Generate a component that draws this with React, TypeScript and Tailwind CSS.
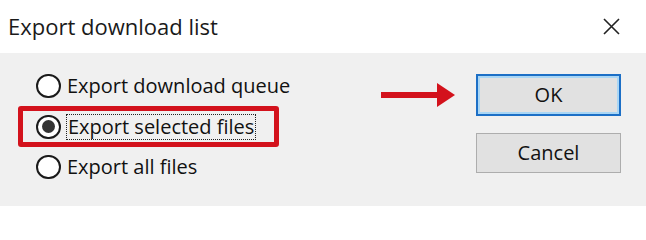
import React from "react";

type RadioRowProps = {
    label: string;
    checked?: boolean;
    focused?: boolean;
};

function RadioRow({ label, checked, focused }: RadioRowProps) {
    return (
        <div
            className={
                focused
                    ? "flex items-center h-[41px] w-[261px] px-[13px] border-[5px] border-[#d3121c] rounded-[3px]"
                    : "flex items-center h-[40px] px-[18px]"
            }
        >
            <span className="flex items-center justify-center w-[25px] h-[24px] rounded-full border-2 border-[#1a1a1a] bg-white shrink-0">
                {checked && <span className="w-[13px] h-[13px] rounded-full bg-[#333]" />}
            </span>
            <span
                className={
                    focused
                        ? "ml-[5px] px-[1px] leading-[24px] whitespace-nowrap border border-dotted border-[#222]"
                        : "ml-[6px] leading-[24px] whitespace-nowrap"
                }
            >
                {label}
            </span>
        </div>
    );
}

export default function App() {
    return (
        <div className="w-[646px] h-[206px] flex flex-col bg-[#f0f0f0] text-[#111] font-['Open_Sans',sans-serif] overflow-hidden">
            <div className="h-[53px] bg-white flex items-center justify-between pl-[8px] pr-[26px] shrink-0">
                <h1 className="text-[22px] text-[#1a1a1a]">Export download list</h1>
                <svg width="17" height="17" viewBox="0 0 17 17" className="text-[#222]">
                    <path d="M1 1L16 16M16 1L1 16" stroke="currentColor" strokeWidth="1.6" />
                </svg>
            </div>

            <div className="flex flex-1 text-[20px]">
                <div className="flex flex-col w-[279px] shrink-0 pt-[13px] pl-[18px]">
                    <RadioRow label="Export download queue" />
                    <RadioRow label="Export selected files" checked focused />
                    <RadioRow label="Export all files" />
                </div>

                <div className="flex flex-1 items-start pt-[21px] pl-[102px]">
                    <svg width="74" height="24" viewBox="0 0 74 24" className="mt-[9px] text-[#d3121c] shrink-0">
                        <rect x="0" y="9" width="58" height="6" fill="currentColor" />
                        <path d="M56 0L74 12L56 24Z" fill="currentColor" />
                    </svg>
                    <div className="flex flex-col gap-[17px] ml-[21px]">
                        <button className="w-[145px] h-[42px] bg-[#e1e1e1] border-2 border-[#1c6fc6] shadow-[inset_0_0_0_2px_#a9d6f5]">
                            OK
                        </button>
                        <button className="w-[145px] h-[40px] bg-[#e1e1e1] border border-[#adadad]">
                            Cancel
                        </button>
                    </div>
                </div>
            </div>
        </div>
    );
}
